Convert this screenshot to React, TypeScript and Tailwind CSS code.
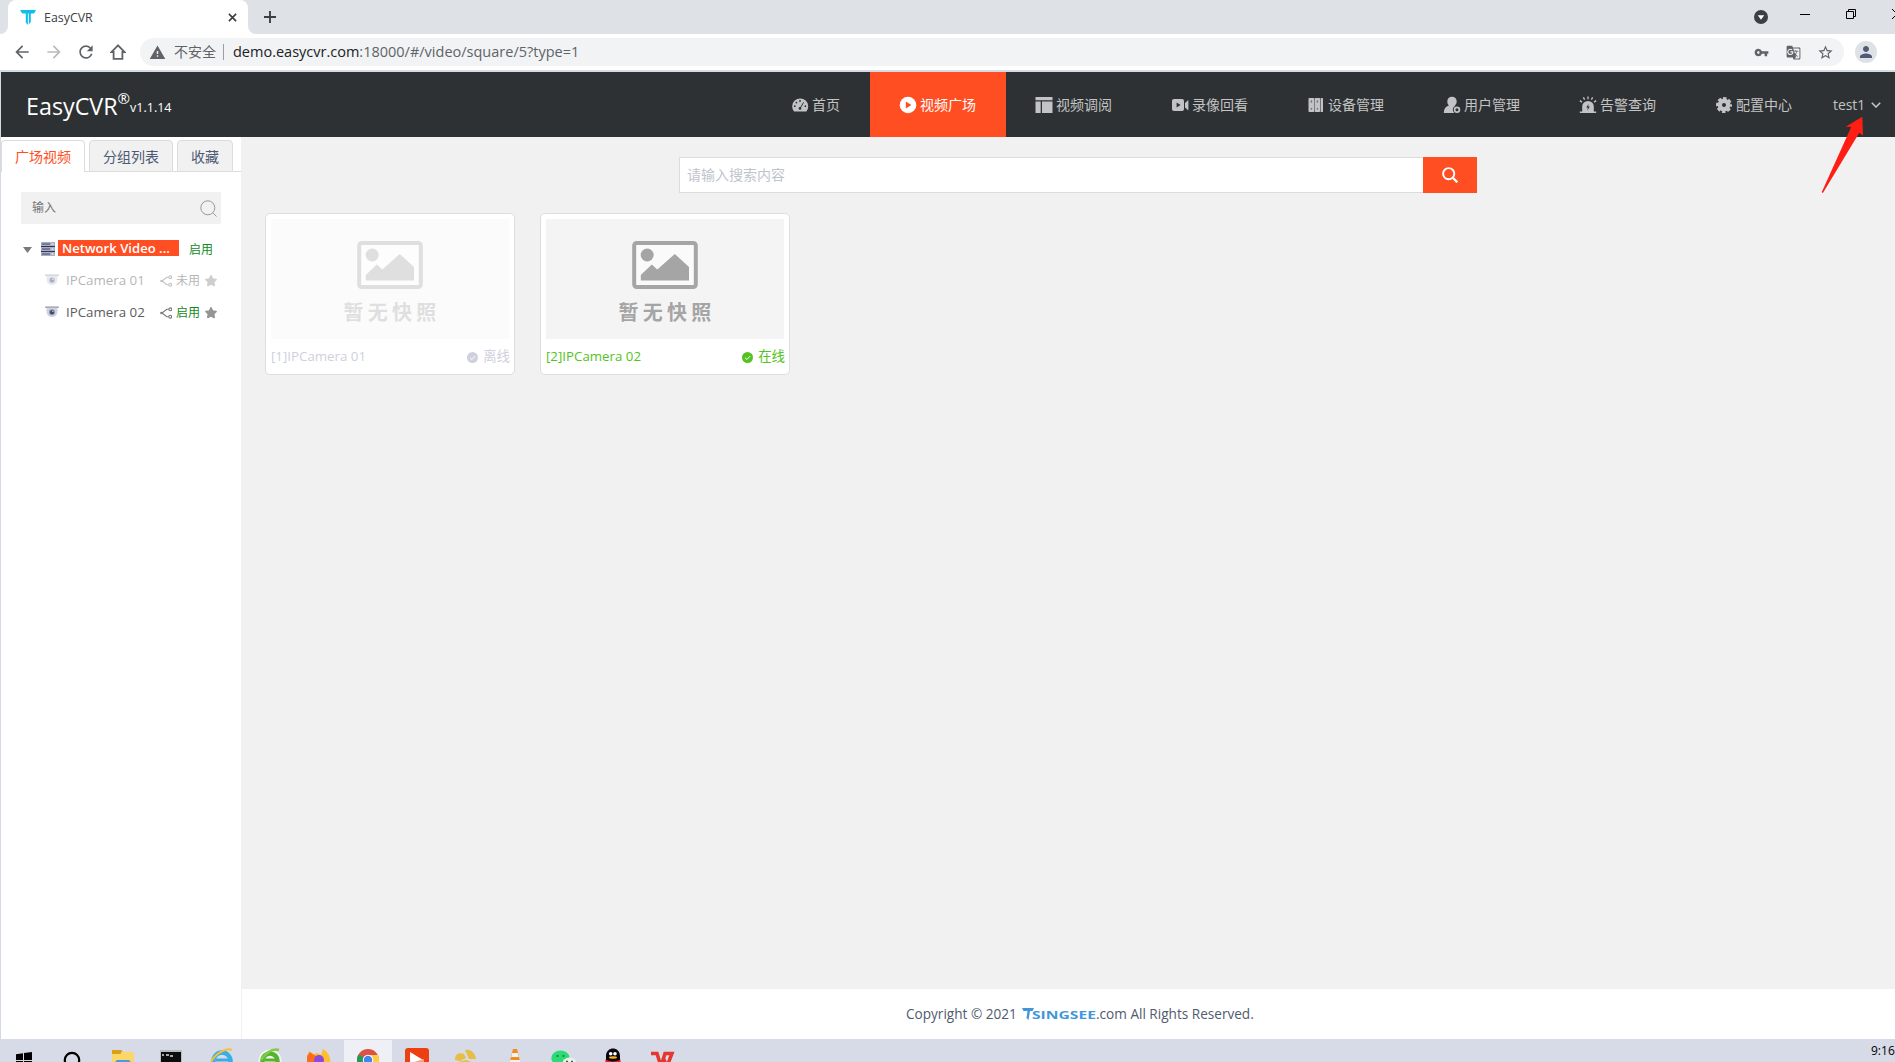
import React from "react";
import { MdArrowBack, MdArrowForward, MdRefresh, MdWarning, MdVpnKey, MdGTranslate, MdStarBorder, MdPerson } from "react-icons/md";

type IconProps = { className?: string };

/* ---------- browser chrome ---------- */

function BrandMark() {
  return (
    <svg viewBox="0 0 16 16" className="h-4 w-4 shrink-0">
      <path d="M0 1h16l-2 3.4h-3.2V13L8.8 15.6V4.4H7.9V16L5.8 13.6V4.4H2.2Z" fill="#12bdec" />
    </svg>
  );
}

function TabStrip() {
  return (
    <div className="relative flex h-[34px] items-stretch bg-[#dee1e6]">
      <div className="flex w-2 shrink-0 bg-white">
        <div className="w-full rounded-br-lg bg-[#dee1e6]" />
      </div>
      <div className="flex w-[240px] shrink-0 items-center rounded-t-lg bg-white pl-3 pr-[11px]">
        <BrandMark />
        <span className="ml-2 flex-1 pt-px text-[12.4px] leading-4 text-[#3c4043]">EasyCVR</span>
        <svg viewBox="0 0 10 10" className="h-[9px] w-[9px]">
          <path d="M1 1l8 8M9 1l-8 8" stroke="#3c4043" strokeWidth="1.8" />
        </svg>
      </div>
      <div className="flex w-2 shrink-0 bg-white">
        <div className="w-full rounded-bl-lg bg-[#dee1e6]" />
      </div>
      <div className="flex flex-1 items-center pl-2">
        <svg viewBox="0 0 12 12" className="h-3 w-3">
          <path d="M6 0v12M0 6h12" stroke="#3c4043" strokeWidth="1.9" />
        </svg>
      </div>
      <div className="flex w-[141px] shrink-0 overflow-hidden">
        <svg viewBox="0 0 14 14" className="mt-[10px] h-[14px] w-[14px] shrink-0">
          <circle cx="7" cy="7" r="7" fill="#3c4043" />
          <path d="M3.8 5.2h6.4L7 9.8Z" fill="#fff" />
        </svg>
        <svg viewBox="0 0 10 10" className="ml-8 mt-[9px] h-[10px] w-[10px] shrink-0">
          <path d="M0 5.5h10" stroke="#000" />
        </svg>
        <svg viewBox="0 0 10 10" className="ml-9 mt-[9px] h-[10px] w-[10px] shrink-0">
          <path d="M.5 2.5h7v7h-7zM2.5 2.5v-2h7v7h-2" fill="none" stroke="#000" />
        </svg>
        <svg viewBox="0 0 10 10" className="ml-9 mt-[9px] h-[10px] w-[10px] shrink-0">
          <path d="M0 0l10 10M10 0L0 10" stroke="#000" />
        </svg>
      </div>
    </div>
  );
}

function Toolbar() {
  return (
    <div className="flex h-[36px] items-center bg-white pl-3">
      <div className="flex items-center text-[#5f6368]">
        <MdArrowBack className="h-5 w-5" />
        <MdArrowForward className="ml-3 h-5 w-5 text-[#b9bbbd]" />
        <MdRefresh className="ml-3 h-5 w-5" />
        <svg viewBox="0 0 16 16" className="ml-[14px] h-4 w-4">
          <path d="M8 1.3L1.4 8H3.6v6.9h8.8V8h2.2Z" fill="none" stroke="#5f6368" strokeWidth="1.8" />
        </svg>
      </div>
      <div className="ml-[14px] flex h-7 flex-1 items-center rounded-full bg-[#f1f3f4] pl-[9px] pr-[10px] text-[#5f6368]">
        <MdWarning className="h-[17px] w-[17px]" />
        <span className="ml-2 text-[14px] leading-5">不安全</span>
        <span className="ml-[7px] h-4 w-px bg-[#9aa0a6]" />
        <span className="ml-[9px] text-[14.5px] leading-5 text-[#5f6368]">
          <span className="text-[#202124]">demo.easycvr.com</span>:18000/#/video/square/5?type=1
        </span>
        <span className="flex-1" />
        <MdVpnKey className="h-[15px] w-[15px]" />
        <MdGTranslate className="ml-[17px] h-[15px] w-[15px]" />
        <MdStarBorder className="ml-4 h-[17px] w-[17px]" />
      </div>
      <div className="ml-[11px] mr-[18px] flex h-[22px] w-[22px] items-center justify-center rounded-full bg-[#dee1e6]">
        <MdPerson className="h-[18px] w-[18px] text-[#505b76]" />
      </div>
    </div>
  );
}

/* ---------- application header ---------- */

const GaugeIcon = ({ className }: IconProps) => (
  <svg viewBox="0 0 18 18" className={className}>
    <path d="M3 15.5A8 8 0 1 1 15.4 15.5Z" fill="currentColor" />
    <g fill="#2e3133">
      <circle cx="9" cy="5" r=".9" /><circle cx="5.4" cy="6.6" r=".9" /><circle cx="3.8" cy="10.2" r=".9" />
      <circle cx="14.4" cy="10.2" r=".9" /><circle cx="9" cy="12.4" r="1.3" />
    </g>
    <path d="M9 12.4L12.6 6.4" stroke="#2e3133" />
  </svg>
);
const PlayIcon = ({ className }: IconProps) => (
  <svg viewBox="0 0 18 18" className={className}>
    <circle cx="9" cy="9" r="8.3" fill="currentColor" />
    <path d="M6.8 5.6L12.4 9l-5.6 3.4Z" fill="#ff4e22" />
  </svg>
);
const LayoutIcon = ({ className }: IconProps) => (
  <svg viewBox="0 0 18 18" className={className} fill="currentColor">
    <path d="M.5 1h17v3.2H.5zM.5 5.4h5.2V17H.5zM7 5.4h10.5V17H7z" />
  </svg>
);
const CameraIcon = ({ className }: IconProps) => (
  <svg viewBox="0 0 18 18" className={className}>
    <rect x="1" y="3" width="12" height="12" rx="2" fill="currentColor" />
    <path d="M14 7l3.4-3v10.5L14 11.5Z" fill="currentColor" />
    <path d="M5.6 6.4L9.6 9l-4 2.6Z" fill="#2e3133" />
  </svg>
);
const BinderIcon = ({ className }: IconProps) => (
  <svg viewBox="0 0 18 18" className={className} fill="currentColor">
    <rect x="1.5" y="2" width="5.8" height="14" rx=".8" />
    <rect x="7.7" y="2" width="5.4" height="14" rx=".8" />
    <rect x="13.6" y="2" width="2.4" height="14" rx=".5" />
    <path d="M3.7 4.5h1.4v2H3.7zM9.7 4.5h1.4v2H9.7zM3.7 12h1.4v1.5H3.7zM9.7 12h1.4v1.5H9.7z" fill="#6b6d6e" />
  </svg>
);
const UserIcon = ({ className }: IconProps) => (
  <svg viewBox="0 0 18 18" className={className}>
    <path d="M9 .8c2.8 0 4.7 2 4.7 4.6 0 1.8-.8 3.2-2 4.1 1.8.6 3 1.4 3.8 2.6L16 17H.8c0-4.1 1.7-6.4 5.2-7.5C4.9 8.6 4.3 7.2 4.3 5.4 4.3 2.8 6.2.8 9 .8Z" fill="currentColor" />
    <circle cx="14" cy="13.7" r="4.2" fill="#2e3133" />
    <circle cx="14" cy="13.7" r="2.4" fill="none" stroke="currentColor" strokeWidth="1.7" />
  </svg>
);
const AlarmIcon = ({ className }: IconProps) => (
  <svg viewBox="0 0 18 18" className={className}>
    <path d="M.8 17v-1.6h2.4V10.5a5.8 5.6 0 0 1 11.6 0v4.9h2.4V17Z" fill="currentColor" />
    <path d="M9 .6v2.6M4.4 1.4l1.2 2.2M13.6 1.4l-1.2 2.2M.8 4.6l2.2 1.5M17.2 4.6L15 6.1" stroke="currentColor" strokeWidth="1.3" />
    <path d="M9.6 8L7.2 11.5h1.6L8.3 14.5l2.6-4H9.2Z" fill="#2e3133" />
  </svg>
);
const GearIcon = ({ className }: IconProps) => (
  <svg viewBox="0 0 18 18" className={className}>
    <circle cx="9" cy="9" r="6.4" fill="currentColor" />
    <circle cx="9" cy="9" r="6.3" fill="none" stroke="currentColor" strokeWidth="3.4" strokeDasharray="3.2 1.748" strokeDashoffset="1.6" />
    <circle cx="9" cy="9" r="2" fill="#2e3133" />
  </svg>
);

const NAV = [
  { label: "首页", Icon: GaugeIcon },
  { label: "视频广场", Icon: PlayIcon, active: true },
  { label: "视频调阅", Icon: LayoutIcon },
  { label: "录像回看", Icon: CameraIcon },
  { label: "设备管理", Icon: BinderIcon },
  { label: "用户管理", Icon: UserIcon },
  { label: "告警查询", Icon: AlarmIcon },
  { label: "配置中心", Icon: GearIcon },
];

function Header() {
  return (
    <header className="flex h-[65px] shrink-0 bg-[#2e3133] text-[#c2c3c4]">
      <div className="flex flex-1 items-start pl-[25px] pt-[18px] text-white">
        <span className="text-[23.3px] leading-8">EasyCVR</span>
        <span className="mt-[-2px] text-[15px] leading-5">®</span>
        <span className="mt-[8px] text-[12.5px] font-medium leading-5">v1.1.14</span>
      </div>
      <nav className="flex">
        {NAV.map(({ label, Icon, active }) => (
          <a
            key={label}
            className={
              active
                ? "flex items-center bg-[#ff4e22] pl-[29px] pr-[30px] text-[14px] text-white"
                : "flex items-center pl-[29px] pr-[30px] text-[14px]"
            }
          >
            <Icon className="mr-[3px] h-[18px] w-[18px]" />
            <span className="leading-5">{label}</span>
          </a>
        ))}
      </nav>
      <div className="flex w-[73px] items-center pl-[11px]">
        <span className="text-[13.9px] leading-5">test1</span>
        <svg viewBox="0 0 10 6" className="ml-[6px] mt-px h-[6px] w-[10px]">
          <path d="M.8.8L5 5 9.2.8" fill="none" stroke="currentColor" strokeWidth="1.6" />
        </svg>
      </div>
    </header>
  );
}

/* ---------- sidebar ---------- */

function CamIcon() {
  return (
    <svg viewBox="0 0 14 12" className="h-3 w-[14px] shrink-0">
      <path d="M1.5 2h11v3.5a5.500 5.500 0 0 1-11 0Z" fill="#ccd2ea" />
      <rect y=".5" width="14" height="1.3" rx=".4" fill="#8d91a2" />
      <circle cx="7" cy="6.3" r="3" fill="#8f95a6" />
      <circle cx="7" cy="6.3" r="2" fill="#3f4455" />
      <circle cx="7.8" cy="5.5" r=".7" fill="#c8d0ee" />
    </svg>
  );
}

function ServerIcon() {
  return (
    <svg viewBox="0 0 14 14" className="h-[14px] w-[14px] shrink-0">
      <rect width="14" height="14" fill="#c3c7de" />
      {[0, 5, 10].map((y) => (
        <g key={y}>
          <rect y={y} width="14" height="4" fill="#a9adc6" />
          <rect y={y + 1.4} x="1" width="8" height="1.3" fill="#5d6078" />
          <rect y={y + 1.4} x="10.5" width="2" height="1.3" fill="#e7e9f5" />
        </g>
      ))}
      <path d="M0 4.5h14M0 9.5h14" stroke="#33364d" />
    </svg>
  );
}

function ShareIcon() {
  return (
    <svg viewBox="0 0 12 12" className="h-3 w-3 shrink-0" fill="none" stroke="#77797b" strokeWidth="1.1">
      <path d="M8.8 2.3H6.8L2 6l4.800 3.700h2" />
      <circle cx="10.2" cy="2.3" r="1.4" />
      <circle cx="10.2" cy="9.7" r="1.4" />
      <circle cx="1.5" cy="6" r=".8" />
    </svg>
  );
}

function StarIcon() {
  return (
    <svg viewBox="0 0 12 12" className="h-3 w-3 shrink-0">
      <path d="M6 .8l1.600 3.200 3.500.5-2.500 2.500.6 3.500L6 8.900 2.800 10.500l.6-3.500L.9 4.500 4.400 4Z" fill="#939597" stroke="#939597" strokeWidth="1.6" strokeLinejoin="round" />
    </svg>
  );
}

function CameraRow({ name, state, on }: { name: string; state: string; on: boolean }) {
  return (
    <div className="flex h-8 items-center pl-[44px] text-[#5a5c5e]">
      <div className={on ? "flex items-center" : "flex items-center opacity-45"}>
        <CamIcon />
        <span className="ml-[7px] w-[94px] whitespace-nowrap text-[13.3px] leading-5">
          {name}
        </span>
        <span className="mt-[2px]"><ShareIcon /></span>
        <span className={on ? "ml-1 mt-[2px] text-[12px] leading-4 text-[#128a1c]" : "ml-1 mt-[2px] text-[12px] leading-4"}>{state}</span>
        <span className="ml-[5px] mt-[2px]"><StarIcon /></span>
      </div>
    </div>
  );
}

function Sidebar() {
  return (
    <aside className="flex w-[240px] shrink-0 flex-col bg-white pt-[3px] text-[14px]">
      <div className="flex h-[32px] text-[#4d5a73]">
        <div className="flex w-[84px] items-center justify-center rounded-t border border-b-0 border-[#dcdcdc] text-[#ff4e22]">广场视频</div>
        <div className="w-1 border-b border-[#dcdcdc]" />
        <div className="flex w-[84px] items-center justify-center rounded-t border border-[#dcdcdc] bg-[#f1f1f1]">分组列表</div>
        <div className="w-1 border-b border-[#dcdcdc]" />
        <div className="flex w-[56px] items-center justify-center rounded-t border border-[#dcdcdc] bg-[#f1f1f1]">收藏</div>
        <div className="flex-1 border-b border-[#dcdcdc]" />
      </div>
      <div className="ml-5 mt-5 flex h-8 w-[200px] items-center justify-between bg-[#f1f1f1] pl-[11px] pr-1">
        <span className="text-[12px] text-[#757575]">输入</span>
        <svg viewBox="0 0 17 17" className="h-[17px] w-[17px]" fill="none" stroke="#999">
          <circle cx="7.8" cy="7.8" r="7" />
          <path d="M12.8 12.8l3.700 3.700" />
        </svg>
      </div>
      <div className="mt-2 flex h-8 items-center pl-[22px]">
        <svg viewBox="0 0 9 6" className="mt-[3px] h-[6px] w-[9px]">
          <path d="M0 0h9L4.500 6Z" fill="#77797b" />
        </svg>
        <span className="ml-[9px] mt-[2px]"><ServerIcon /></span>
        <span className="ml-[3px] flex h-4 w-[121px] items-center whitespace-nowrap bg-[#ff4e22] pl-1 pt-px text-[13px] font-semibold tracking-[0.05px] text-white">
          Network Video ...
        </span>
        <span className="ml-[10px] mt-[3px] text-[12px] leading-4 text-[#128a1c]">启用</span>
      </div>
      <CameraRow name="IPCamera 01" state="未用" on={false} />
      <CameraRow name="IPCamera 02" state="启用" on />
    </aside>
  );
}

/* ---------- main area ---------- */

function SnapshotCard({ name, state, on }: { name: string; state: string; on: boolean }) {
  return (
    <div className="flex h-[162px] w-[250px] flex-col rounded-[5px] border border-[#dedede] bg-white px-[5px] pt-[5px]">
      <div className={on ? "flex h-[120px] flex-col items-center bg-[#f4f4f4]" : "flex h-[120px] flex-col items-center bg-[#f4f4f4] opacity-35"}>
        <svg viewBox="0 0 66 48" className="mr-px mt-[22px] h-12 w-[66px]">
          <rect x="2.2" y="2" width="61.6" height="44" rx="2.5" fill="#fafafa" stroke="#a5a5a5" strokeWidth="4" />
          <circle cx="15.2" cy="14" r="6.5" fill="#a5a5a5" />
          <path d="M8.8 39.500V34l11-10.500 5.500 5L42.800 13 57 26v13.500Z" fill="#a5a5a5" />
        </svg>
        <span className="ml-1 mt-[11px] text-[20px] font-bold leading-[26px] tracking-[4.3px] text-[#a5a5a5]">暂无快照</span>
      </div>
      <div className={on ? "mt-[5px] flex items-center justify-between text-[#52c322]" : "mt-[5px] flex items-center justify-between text-[#cfd0de]"}>
        <span className="text-[13.3px] leading-6">{name}</span>
        <span className="-mr-px flex items-center text-[13.4px] leading-6">
          <svg viewBox="0 0 11 11" className="mr-[5px] mt-[2px] h-[11px] w-[11px]">
            <circle cx="5.5" cy="5.5" r="5.5" fill="currentColor" />
            <path d="M3 5.700l1.900 1.800L8.200 4" fill="none" stroke="#fff" />
          </svg>
          {state}
        </span>
      </div>
    </div>
  );
}

function Main() {
  return (
    <main className="flex flex-1 flex-col bg-[#f1f1f1]">
      <div className="flex flex-1 flex-col pl-[24px] pt-5">
        <div className="ml-[414px] flex h-9 w-[798px]">
          <div className="flex flex-1 items-center border border-r-0 border-[#dcdcdc] bg-white pb-[2px] pl-[7px] text-[14px] text-[#c0c4cc]">
            请输入搜索内容
          </div>
          <div className="flex w-[54px] items-center justify-center bg-[#ff4e22]">
            <svg viewBox="0 0 16 16" className="h-4 w-4" fill="none" stroke="#fff" strokeWidth="1.9">
              <circle cx="6.7" cy="6.7" r="5.6" />
              <path d="M10.8 10.8l4.500 4.500" strokeWidth="2.3" />
            </svg>
          </div>
        </div>
        <div className="mt-5 flex gap-[25px]">
          <SnapshotCard name="[1]IPCamera 01" state="离线" on={false} />
          <SnapshotCard name="[2]IPCamera 02" state="在线" on />
        </div>
      </div>
      <footer className="ml-px flex h-[50px] items-center bg-white pl-[664px] text-[13.6px] text-[#515a6e]">
        <span className="w-[116px] whitespace-nowrap">Copyright © 2021</span>
        <span className="flex w-[74px] items-center text-[#3f97da]">
          <svg viewBox="0 0 12 12" className="h-[12px] w-[12px] shrink-0">
            <path d="M0 0h12l-1.500 3H8L6.500 12 4.500 10 5.500 3H1.500Z" fill="#3f97da" />
          </svg>
          <span className="-ml-[2px] mt-px w-[46px] origin-left scale-x-[1.42] text-[11px] font-bold leading-3">SINGSEE</span>
        </span>
        <span>.com All Rights Reserved.</span>
      </footer>
    </main>
  );
}

/* ---------- desktop taskbar ---------- */

const TASK_ICONS: React.ReactNode[] = [
  <path key="win" d="M4 6.200l7-1V12H4zM12 5l8-1v8h-8zM4 13h7v7l-7-1zM12 13h8v8l-8-1z" fill="#000" />,
  <circle key="search" cx="12" cy="12" r="7.2" fill="none" stroke="#000" strokeWidth="2.2" />,
  <g key="folder">
    <path d="M4 2h9l2 2h-2v6H4z" fill="#d9a115" />
    <path d="M4 6h9l1.500-2H26v18H4z" fill="#fcd667" />
    <path d="M9 12h12l2 2v8H7v-8z" fill="#4b9bd8" />
  </g>,
  <g key="cmd">
    <path d="M4 2h22v20H4z" fill="#b9bcbf" />
    <path d="M5 4h20v16H5z" fill="#0c0c0c" />
    <path d="M6 7h2M10 7h3M14 8h3" stroke="#ddd" strokeWidth="1.5" />
  </g>,
  <g key="ie">
    <circle cx="16" cy="13" r="8.5" fill="none" stroke="#38aee6" strokeWidth="4.5" />
    <path d="M10 12h13" stroke="#38aee6" strokeWidth="3" />
    <path d="M5 14C9 6 20-1 26 2" fill="none" stroke="#f5bf38" strokeWidth="2" />
  </g>,
  <g key="e360" transform="translate(4 0)">
    <circle cx="12" cy="13" r="11.5" fill="#f1f5ef" />
    <circle cx="12" cy="13" r="7.5" fill="none" stroke="#55b42e" strokeWidth="4.5" />
    <path d="M7 12h11" stroke="#55b42e" strokeWidth="3" />
    <path d="M3 12C8 5 14 0 21 2" fill="none" stroke="#80cb47" strokeWidth="2.5" />
  </g>,
  <g key="firefox">
    <path d="M1 9L3 3l4 3 5-1 3 2 2-6c5 3 8 8 7 14H1z" fill="#ffbd2f" />
    <path d="M1 8l3-4 4 3 5 2-3 8H1z" fill="#ff6a20" />
    <circle cx="13" cy="12" r="5" fill="#8a4bdc" />
  </g>,
  <g key="chrome">
    <circle cx="12" cy="12" r="11" fill="#dc5246" />
    <path d="M12 12L2.500 6.500A11 11 0 0 0 12 23z" fill="#1f9d58" />
    <path d="M12 7h10a11 11 0 0 1-10 16z" fill="#fccd45" />
    <circle cx="12" cy="12" r="5.2" fill="#fff" />
    <circle cx="12" cy="12" r="4.2" fill="#4285ee" />
  </g>,
  <g key="player">
    <rect width="24" height="24" rx="3" fill="#ed3f12" />
    <path d="M5 4l14 8.500L5 22z" fill="#fff" />
    <path d="M6 15l13-4v4L6 22z" fill="#f3a084" />
  </g>,
  <g key="gold" fill="#e6bd45">
    <path d="M1 12c0-5 3-8 9-6l2 4-6 3zM11 2c5-1 10 2 11 9h-7zM4 14l8-2 8 3v9H4z" />
  </g>,
  <g key="vlc">
    <path d="M11 1h4l5 20H6z" fill="#f58a1f" />
    <path d="M10.200 5h5.600l1 4H9.200zM8.200 12h9.600l.8 3H7.500z" fill="#f2f2f2" />
  </g>,
  <g key="wechat">
    <ellipse cx="8.5" cy="10" rx="9.2" ry="7.5" fill="#2bdc74" />
    <ellipse cx="17.5" cy="15.5" rx="7" ry="6" fill="#efefef" />
    <path d="M4.500 8h2M10.500 8h2M14 13.500h2M19 13.500h2" stroke="#266b42" strokeWidth="1.5" />
  </g>,
  <g key="qq">
    <path d="M5 13V8c0-10 14-10 14 0v5l2 7H3z" fill="#090909" />
    <circle cx="9.7" cy="5.8" r="1.8" fill="#fff" /><circle cx="14" cy="5.8" r="1.8" fill="#fff" />
    <ellipse cx="12" cy="9.5" rx="4" ry="1.2" fill="#f6b42d" />
    <path d="M4.500 11.500c5 2.500 10 2.500 15 0v3h-15z" fill="#e22222" />
  </g>,
  <g key="wps" fill="none" stroke="#e6372e" strokeWidth="3.5">
    <path d="M3 5.500h6l4 13 4-13h7l-5 13-4-9" />
  </g>,
];

/* horizontal nudge of each glyph inside its 48px cell */
const CELL_PAD = ["pl-3", "pl-3", "pl-3", "pl-3", "pl-[14px]", "pl-[14px]", "pl-[18px]", "pl-3", "pl-[13px]", "pl-[14px]", "pl-[14px]", "pl-4", "pl-[17px]", "pl-4"];

function Taskbar() {
  return (
    <div className="flex h-[23px] shrink-0 items-stretch overflow-hidden bg-[#d7dae7] text-black">
      {TASK_ICONS.map((icon, i) => (
        <div
          key={i}
          className={`${CELL_PAD[i]} ${i === 7 ? "mt-px bg-[#eff0f5] pt-2" : "pt-[9px]"} ${i === 6 ? "w-[56px]" : "w-12"} shrink-0`}
        >
          <svg viewBox="0 0 24 24" className="h-6 w-6 overflow-visible">{icon}</svg>
        </div>
      ))}
      <div className="flex-1" />
      <span className="w-[24px] whitespace-nowrap pt-[3px] text-[12px] leading-[18px]">9:16</span>
    </div>
  );
}

export default function App() {
  return (
    <div className="relative flex h-[1062px] w-[1895px] flex-col overflow-hidden font-['Open_Sans','Noto_Sans_CJK_SC',sans-serif]">
      <TabStrip />
      <Toolbar />
      <div className="flex min-h-0 flex-1 flex-col border-l border-t-2 border-[#d3dae4]">
        <Header />
        <div className="flex min-h-0 flex-1">
          <Sidebar />
          <Main />
        </div>
      </div>
      <Taskbar />
      <svg viewBox="0 0 46 80" className="pointer-events-none absolute left-[1820px] top-[115px] h-20 w-[46px]">
        <path d="M42.3 1.700L25.700 11.700l5.500.4L1.700 77.200l1.200.9L39.300 17.700 43 20.500Z" fill="#ff1e14" />
      </svg>
    </div>
  );
}
